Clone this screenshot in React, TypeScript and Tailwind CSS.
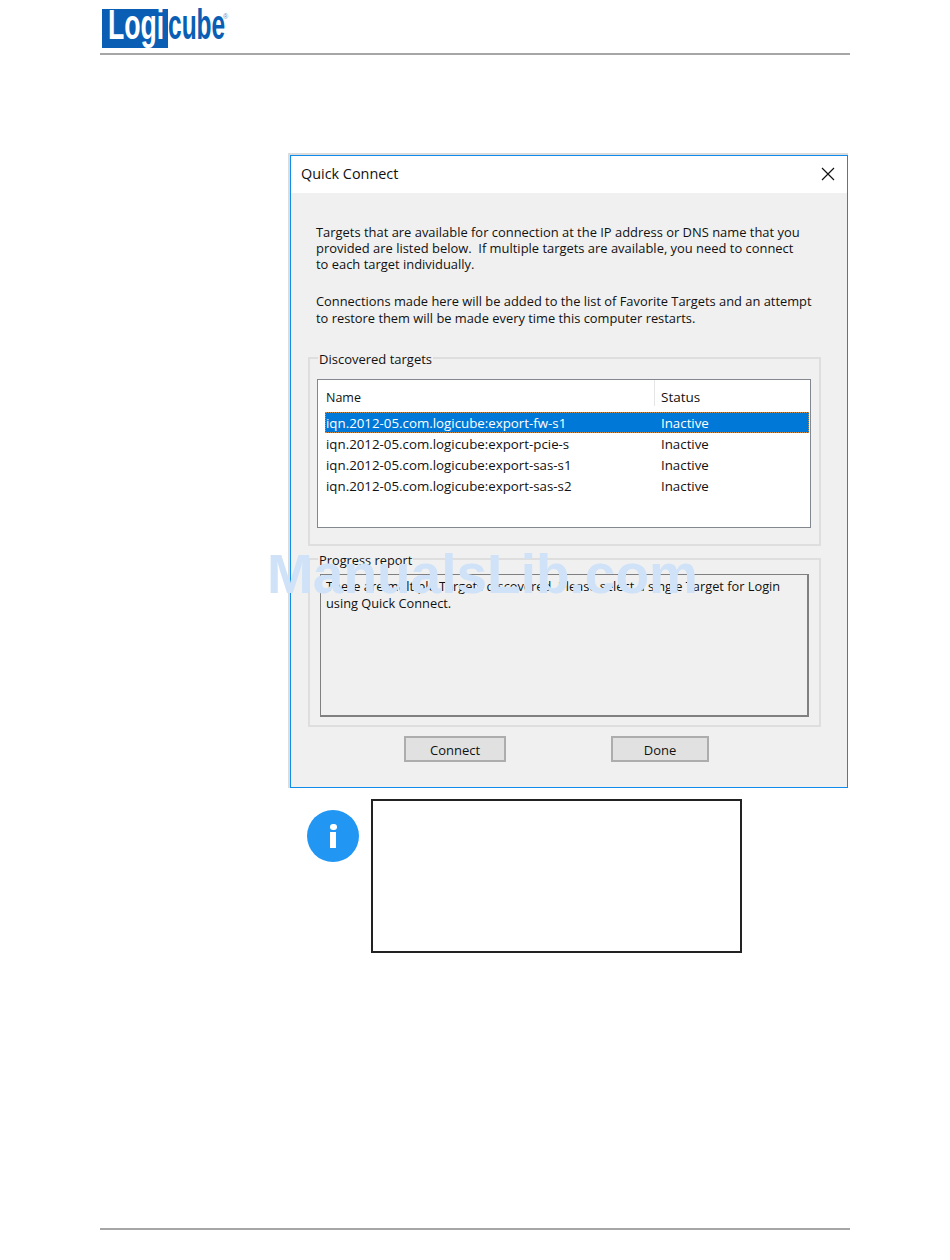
const font = { fontFamily: '"Open Sans", "Noto Sans", sans-serif' };

function Logo() {
  return (
    <div className="flex items-start h-[48px] pt-[9px]">
      <div className="w-[66px] h-[39px] bg-[#0a5fb4] pl-[6px]">
        <span className="block origin-top-left scale-x-[0.62] text-white font-bold text-[43px] leading-[31px] whitespace-nowrap font-['Liberation_Sans',sans-serif]">
          Logi
        </span>
      </div>
      <div className="w-[54px] h-[39px]">
        <span className="block origin-top-left scale-x-[0.57] text-[#0a5fb4] font-bold text-[43px] leading-[31px] whitespace-nowrap font-['Liberation_Sans',sans-serif]">
          cube
        </span>
      </div>
      <span className="text-[#5b8fc7] text-[7px] leading-[8px] mt-[4px] ml-[1px] font-['Liberation_Sans',sans-serif]">®</span>
    </div>
  );
}

function Row({ name, selected }: { name: string; selected?: boolean }) {
  return (
    <div
      className={
        selected
          ? "flex h-[21px] items-center text-[13.3px] bg-[#0078d7] text-white outline-1 outline-dotted outline-offset-[-1px] outline-[#c98a4a]"
          : "flex h-[21px] items-center text-[13.3px] text-[#111]"
      }
    >
      <div className="w-[336px] pl-[1px] whitespace-nowrap">{name}</div>
      <div>Inactive</div>
    </div>
  );
}

function Button({ label, w, ml }: { label: string; w: string; ml: string }) {
  return (
    <button className={`${w} ${ml} h-[26px] pt-[1px] bg-[#e1e1e1] border-2 border-[#adadad] text-[#111] text-[13px]`}>
      {label}
    </button>
  );
}

export default function App() {
  return (
    <div className="relative w-[950px] h-[1260px] bg-white px-[100px] flex flex-col" style={font}>
      <header className="h-[55px] border-b-2 border-[#a6a6a6] pl-[2px]">
        <Logo />
      </header>

      <section className="ml-[190px] mt-[100px] w-[558px] h-[633px] border border-[#0f8cea] shadow-[-1px_-1px_0_1px_#dcdcdc] bg-[#f0f0f0] text-[13px] leading-[16px] text-[#111] flex flex-col">
        <div className="h-[37px] bg-white flex items-center justify-between pl-[10px] pr-[12px] pb-[2px]">
          <span className="text-[14.4px] text-[#111]">Quick Connect</span>
          <svg width="14" height="14" viewBox="0 0 14 14" className="block">
            <path d="M1 1 L13 13 M13 1 L1 13" stroke="#111" strokeWidth="1.2" fill="none" />
          </svg>
        </div>

        <div className="pl-[17px] pr-[26px] flex flex-col flex-1">
          <p className="pl-[8px] mt-[31px] whitespace-nowrap text-[12.93px]">
            Targets that are available for connection at the IP address or DNS name that you<br />
            provided are listed below.&nbsp; If multiple targets are available, you need to connect<br />
            to each target individually.
          </p>
          <p className="pl-[8px] mt-[21px] whitespace-nowrap leading-[17px] text-[12.87px]">
            Connections made here will be added to the list of Favorite Targets and an attempt<br />
            to restore them will be made every time this computer restarts.
          </p>

          <fieldset className="mt-[22px] h-[197px] border-2 border-[#dedede] pl-[7px] pr-[8px]">
            <legend className="ml-[1px] px-[1px] pt-[2px] leading-[16px]">Discovered targets</legend>
            <div className="mt-[12px] h-[149px] border border-[#828790] bg-white pl-[7px] pr-[1px]">
              <div className="flex h-[32px] items-end pb-[6px]">
                <div className="w-[330px] pl-[1px] h-[26px] flex items-end border-r border-[#e5e5e5] text-[12.5px]">Name</div>
                <div className="pl-[6px] text-[13.5px] pb-[1px]">Status</div>
              </div>
              <Row name="iqn.2012-05.com.logicube:export-fw-s1" selected />
              <Row name="iqn.2012-05.com.logicube:export-pcie-s" />
              <Row name="iqn.2012-05.com.logicube:export-sas-s1" />
              <Row name="iqn.2012-05.com.logicube:export-sas-s2" />
            </div>
          </fieldset>

          <fieldset className="mt-[4px] h-[177px] border-2 border-[#dedede] pl-[10px] pr-[10px]">
            <legend className="-ml-[2px] px-[1px] pt-[2px] leading-[16px] text-[12.8px]">Progress report</legend>
            <div className="mt-[6px] h-[143px] border-2 border-[#808080] border-l border-t px-[5px] pt-[3px] leading-[17px] text-[12.8px]">
              There are multiple Targets discovered. Please select a single Target for Login using Quick Connect.
            </div>
          </fieldset>

          <div className="flex mt-[9px]">
            <Button label="Connect" w="w-[102px]" ml="ml-[96px]" />
            <Button label="Done" w="w-[98px]" ml="ml-[105px]" />
          </div>
        </div>
      </section>

      <div className="flex mt-[11px] ml-[207px]">
        <div className="mt-[11px] w-[52px] h-[52px] rounded-full bg-[#2196f3] flex flex-col items-center pt-[14px]">
          <div className="w-[7px] h-[6px] rounded-full bg-white" />
          <div className="mt-[2px] w-[6px] h-[16px] bg-white" />
        </div>
        <div className="ml-[12px] w-[371px] h-[154px] border-2 border-[#222] bg-white" />
      </div>

      <footer className="mt-auto mb-[30px] h-[2px] bg-[#a6a6a6]" />

      <div className="absolute left-[267px] top-[536px] text-[55px] leading-[76px] font-bold text-[#cfe2f8] whitespace-nowrap font-['Liberation_Sans',sans-serif]">
        ManualsLib.com
      </div>
    </div>
  );
}
